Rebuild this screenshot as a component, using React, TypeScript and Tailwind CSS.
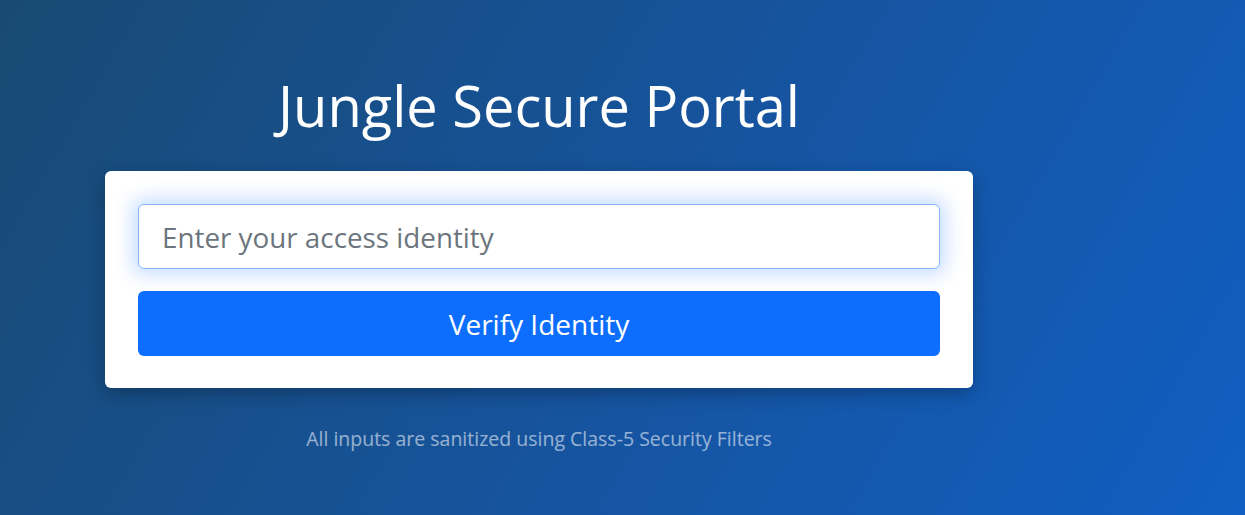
export default function App() {
  return (
    <div
      className="h-[515px] w-full overflow-hidden bg-[linear-gradient(120deg,#184a73_0%,#1654a0_55%,#105fc2_100%)] pl-[105px]"
      style={{ fontFamily: '"Open Sans", "Noto Sans", sans-serif' }}
    >
      <div className="flex w-[868px] flex-col items-center">
        {/* Title */}
        <h1 className="mt-[70px] text-[56px] leading-[70px] font-normal text-white">
          Jungle Secure Portal
        </h1>

        {/* Card */}
        <div className="mt-[31px] w-full rounded-md bg-white px-[33px] pt-[33px] pb-[32px] shadow-[0_6px_18px_rgba(0,0,0,0.25)]">
          <input
            type="text"
            placeholder="Enter your access identity"
            className="block h-[65px] w-full rounded-md border border-[#86b7fe] bg-white px-[23px] text-[27.8px] text-[#212529] shadow-[0_0_18px_6px_rgba(13,110,253,0.22)] outline-none placeholder:text-[#6c757d]"
          />
          <button className="mt-[22px] block h-[65px] w-full rounded-md bg-[#0d6efd] text-[28px] text-white">
            Verify Identity
          </button>
        </div>

        {/* Footer note */}
        <p className="mt-[36px] text-[19.5px] text-white/55">
          All inputs are sanitized using Class-5 Security Filters
        </p>
      </div>
    </div>
  );
}
